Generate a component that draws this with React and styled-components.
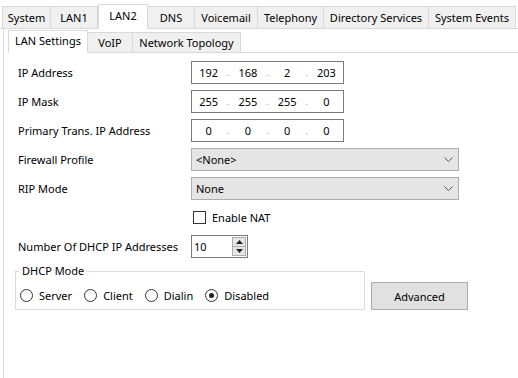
import styled, { createGlobalStyle } from "styled-components";

const GlobalStyle = createGlobalStyle`
	html, body {
		margin: 0;
		padding: 0;
		background: #ffffff;
	}
	body {
		font-family: "Noto Sans", "Open Sans", sans-serif;
		font-size: 11px;
		color: #000;
	}
`;

const Window = styled.div`
	width: 518px;
	height: 378px;
	display: flex;
	flex-direction: column;
	background: #fff;
	overflow: hidden;
`;

const TabStrip = styled.div`
	display: flex;
	align-items: flex-end;
	height: ${(p) => p.$height || 29}px;
	padding-left: ${(p) => p.$pad || 0}px;
	border-bottom: 1px solid #d9d9d9;
	box-sizing: border-box;
	flex-shrink: 0;
`;

const Tab = styled.div`
	width: ${(p) => p.$w}px;
	height: ${(p) => (p.$active ? p.$h + 3 : p.$h)}px;
	box-sizing: border-box;
	display: flex;
	align-items: center;
	justify-content: center;
	padding-bottom: ${(p) => (p.$active ? 3 : 0)}px;
	background: ${(p) => (p.$active ? "#ffffff" : "#f0f0f0")};
	border: 1px solid #d9d9d9;
	border-bottom: ${(p) => (p.$active ? "1px solid #fff" : "none")};
	border-left-width: ${(p) => (p.$first || p.$active ? 1 : 0)}px;
	margin-bottom: ${(p) => (p.$active ? -1 : 0)}px;
	white-space: nowrap;
	position: relative;
	z-index: ${(p) => (p.$active ? 1 : 0)};
`;

const Page = styled.div`
	flex: 1;
	margin-left: 3px;
	border-left: 1px solid #d9d9d9;
	padding-left: 4px;
	display: flex;
	flex-direction: column;
`;

const Form = styled.div`
	display: flex;
	flex-direction: column;
	gap: 7px;
	padding: 8px 0 0 10px;
`;

const Row = styled.div`
	display: grid;
	grid-template-columns: 173px auto;
	align-items: center;
	height: 22px;
`;

const Label = styled.div`
	white-space: nowrap;
`;

const IpBox = styled.div`
	width: 153px;
	height: 23px;
	box-sizing: border-box;
	border: 1px solid #7a7a7a;
	display: grid;
	grid-template-columns: 1fr 6px 1fr 6px 1fr 6px 1fr;
	align-items: center;
	text-align: center;
	background: #fff;
`;

const Dot = styled.span`
	color: #9a9a9a;
	font-size: 9px;
`;

const Select = styled.div`
	width: 268px;
	height: 23px;
	box-sizing: border-box;
	border: 1px solid #adadad;
	background: #e5e5e5;
	display: flex;
	align-items: center;
	justify-content: space-between;
	padding: 0 5px 0 4px;
`;

const CheckRow = styled.div`
	display: flex;
	align-items: center;
	gap: 6px;
	padding-left: 2px;
`;

const CheckBox = styled.span`
	width: 13px;
	height: 13px;
	box-sizing: border-box;
	border: 1px solid #333;
	background: #fff;
	display: inline-block;
`;

const Spinner = styled.div`
	width: 57px;
	height: 23px;
	box-sizing: border-box;
	border: 1px solid #7a7a7a;
	display: flex;
	align-items: center;
	justify-content: space-between;
	padding: 0 1px 0 2px;
	background: #fff;
`;

const SpinButtons = styled.div`
	display: flex;
	flex-direction: column;
	width: 14px;
	height: 19px;
`;

const SpinButton = styled.div`
	flex: 1;
	border: 1px solid #adadad;
	background: #e5e5e5;
	display: flex;
	align-items: center;
	justify-content: center;
	& + & {
		border-top: none;
	}
`;

const BottomRow = styled.div`
	display: flex;
	align-items: flex-end;
	gap: 6px;
	margin-top: 7px;
	margin-left: -3px;
`;

const GroupBox = styled.div`
	position: relative;
	width: 350px;
	height: 39px;
	box-sizing: border-box;
	border: 1px solid #dcdcdc;
	display: flex;
	align-items: center;
	padding: 10px 0 0 4px;
`;

const GroupTitle = styled.span`
	position: absolute;
	top: -9px;
	left: 3px;
	padding: 0 3px;
	background: #fff;
`;

const RadioOption = styled.label`
	display: flex;
	align-items: center;
	gap: 6px;
	margin-right: 12px;
`;

const RadioCircle = styled.span`
	width: 13px;
	height: 13px;
	box-sizing: border-box;
	border-radius: 50%;
	border: 1px solid #333;
	background: #fff;
	display: inline-flex;
	align-items: center;
	justify-content: center;
	&::after {
		content: "";
		width: 5px;
		height: 5px;
		border-radius: 50%;
		background: #222;
		display: ${(p) => (p.$checked ? "block" : "none")};
	}
`;

const Button = styled.div`
	width: 97px;
	height: 28px;
	box-sizing: border-box;
	border: 1px solid #adadad;
	background: #e1e1e1;
	display: flex;
	align-items: center;
	justify-content: center;
`;

const Chevron = () => (
	<svg width="9" height="5" viewBox="0 0 9 5">
		<path d="M0.5 0.5 L4.5 4.5 L8.5 0.5" fill="none" stroke="#555" strokeWidth="1" />
	</svg>
);

const Arrow = ({ up }) => (
	<svg width="7" height="4" viewBox="0 0 7 4">
		<path d={up ? "M0 4 L3.5 0 L7 4 Z" : "M0 0 L3.5 4 L7 0 Z"} fill="#222" />
	</svg>
);

const topTabs = [
	["System", 49],
	["LAN1", 47],
	["LAN2", 50, true],
	["DNS", 47],
	["Voicemail", 63],
	["Telephony", 66],
	["Directory Services", 105],
	["System Events", 87],
];

const subTabs = [
	["LAN Settings", 80, true],
	["VoIP", 45],
	["Network Topology", 108],
];

const IpField = ({ parts }) => (
	<IpBox>
		<span>{parts[0]}</span>
		<Dot>.</Dot>
		<span>{parts[1]}</span>
		<Dot>.</Dot>
		<span>{parts[2]}</span>
		<Dot>.</Dot>
		<span>{parts[3]}</span>
	</IpBox>
);

const App = () => {
	return (
		<Window>
			<GlobalStyle />
			<TabStrip $pad={2}>
				{topTabs.map(([name, w, active], i) => (
					<Tab key={name} $w={w} $h={22} $active={active} $first={i === 0}>
						{name}
					</Tab>
				))}
			</TabStrip>
			<Page>
				<TabStrip $height={24}>
					{subTabs.map(([name, w, active], i) => (
						<Tab key={name} $w={w} $h={20} $active={active} $first={i === 0}>
							{name}
						</Tab>
					))}
				</TabStrip>
				<Form>
					<Row>
						<Label>IP Address</Label>
						<IpField parts={["192", "168", "2", "203"]} />
					</Row>
					<Row>
						<Label>IP Mask</Label>
						<IpField parts={["255", "255", "255", "0"]} />
					</Row>
					<Row>
						<Label>Primary Trans. IP Address</Label>
						<IpField parts={["0", "0", "0", "0"]} />
					</Row>
					<Row>
						<Label>Firewall Profile</Label>
						<Select>
							<span>&lt;None&gt;</span>
							<Chevron />
						</Select>
					</Row>
					<Row>
						<Label>RIP Mode</Label>
						<Select>
							<span>None</span>
							<Chevron />
						</Select>
					</Row>
					<Row>
						<span />
						<CheckRow>
							<CheckBox />
							<span>Enable NAT</span>
						</CheckRow>
					</Row>
					<Row>
						<Label>Number Of DHCP IP Addresses</Label>
						<Spinner>
							<span>10</span>
							<SpinButtons>
								<SpinButton>
									<Arrow up />
								</SpinButton>
								<SpinButton>
									<Arrow />
								</SpinButton>
							</SpinButtons>
						</Spinner>
					</Row>
					<BottomRow>
						<GroupBox>
							<GroupTitle>DHCP Mode</GroupTitle>
							<RadioOption>
								<RadioCircle />
								Server
							</RadioOption>
							<RadioOption>
								<RadioCircle />
								Client
							</RadioOption>
							<RadioOption>
								<RadioCircle />
								Dialin
							</RadioOption>
							<RadioOption>
								<RadioCircle $checked />
								Disabled
							</RadioOption>
						</GroupBox>
						<Button>Advanced</Button>
					</BottomRow>
				</Form>
			</Page>
		</Window>
	);
};

export default App;
